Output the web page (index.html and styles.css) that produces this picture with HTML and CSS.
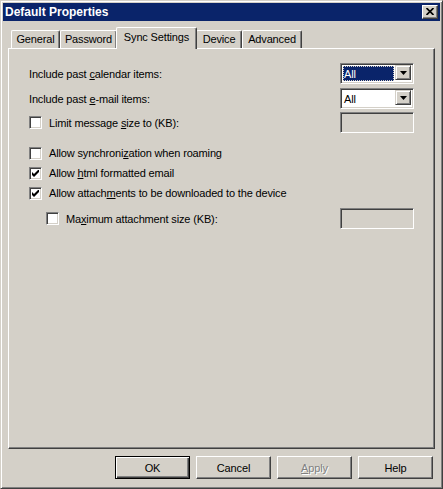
FILE: index.html
```html
<!DOCTYPE html>
<html>
<head>
<meta charset="utf-8">
<title>Default Properties</title>
<link rel="stylesheet" href="styles.css">
</head>
<body>
<div class="window">
  <div class="titlebar">
    <span class="title">Default Properties</span>
    <span class="close-btn">
      <svg width="8" height="7" viewBox="0 0 8 7"><path d="M0.5 0 L7.5 7 M7.5 0 L0.5 7" stroke="#000" stroke-width="1.7" fill="none"/></svg>
    </span>
  </div>
  <div class="client">
    <div class="tabs">
      <div class="tab tab-general">General</div>
      <div class="tab tab-password">Password</div>
      <div class="tab tab-sync active">Sync Settings</div>
      <div class="tab tab-device">Device</div>
      <div class="tab tab-advanced">Advanced</div>
    </div>
    <div class="panel">
      <div class="row row-first">
        <span class="label">Include past <u>c</u>alendar items:</span>
        <div class="combo">
          <div class="combo-value focused"><span class="sel">All</span></div>
          <div class="combo-arrow"><svg width="7" height="4" viewBox="0 0 7 4"><path d="M0 0 H7 L3.5 4 Z" fill="#000"/></svg></div>
        </div>
      </div>
      <div class="row row-second">
        <span class="label">Include past <u>e</u>-mail items:</span>
        <div class="combo">
          <div class="combo-value"><span>All</span></div>
          <div class="combo-arrow"><svg width="7" height="4" viewBox="0 0 7 4"><path d="M0 0 H7 L3.5 4 Z" fill="#000"/></svg></div>
        </div>
      </div>
      <div class="row row-third">
        <span class="check-item"><span class="check"></span><span>Limit message <u>s</u>ize to (KB):</span></span>
        <div class="textbox"></div>
      </div>
      <div class="row row-group">
        <span class="check-item"><span class="check"></span><span>Allow synchroni<u>z</u>ation when roaming</span></span>
      </div>
      <div class="row row-check">
        <span class="check-item"><span class="check checked"><svg width="7" height="7" viewBox="0 0 7 7"><path d="M0 2 L2 4 L7 -1 L7 2 L2 7 L0 5 Z" fill="#000"/></svg></span><span>Allow <u>h</u>tml formatted email</span></span>
      </div>
      <div class="row row-check">
        <span class="check-item"><span class="check checked"><svg width="7" height="7" viewBox="0 0 7 7"><path d="M0 2 L2 4 L7 -1 L7 2 L2 7 L0 5 Z" fill="#000"/></svg></span><span>Allow attach<u>m</u>ents to be downloaded to the device</span></span>
      </div>
      <div class="row row-nested">
        <span class="check-item indent"><span class="check"></span><span>Ma<u>x</u>imum attachment size (KB):</span></span>
        <div class="textbox"></div>
      </div>
    </div>
    <div class="buttons">
      <div class="btn default">OK</div>
      <div class="btn">Cancel</div>
      <div class="btn disabled"><u>A</u>pply</div>
      <div class="btn">Help</div>
    </div>
  </div>
</div>
</body>
</html>
```

FILE: styles.css
```css
* { box-sizing: border-box; }
html, body { margin: 0; padding: 0; }
body {
  background: #d4d0c8;
  font-family: "Liberation Sans", Arial, sans-serif;
  font-size: 11px;
  letter-spacing: -0.15px;
  color: #000;
}
u { text-decoration: underline; text-underline-offset: 1px; }

.window {
  width: 443px;
  height: 489px;
  border: 1px solid;
  border-color: #d4d0c8 #404040 #404040 #d4d0c8;
  box-shadow: inset 1px 1px #fff, inset -1px -1px #808080;
  padding: 2px;
  display: flex;
  flex-direction: column;
}

.titlebar {
  height: 18px;
  background: #0a246a;
  display: flex;
  align-items: center;
  justify-content: space-between;
  padding: 0 2px 0 2px;
}
.title {
  color: #fff;
  font-weight: bold;
  font-size: 12px;
  letter-spacing: 0;
}
.close-btn {
  width: 16px;
  height: 14px;
  background: #d4d0c8;
  border: 1px solid;
  border-color: #fff #404040 #404040 #fff;
  box-shadow: inset -1px -1px #808080;
  display: flex;
  align-items: center;
  justify-content: center;
  padding: 0 1px 1px 0;
}
.close-btn svg { display: block; }

.client {
  padding: 6px 5px 0 5px;
  flex: 1;
  display: flex;
  flex-direction: column;
}

.tabs {
  display: flex;
  align-items: flex-end;
  height: 21px;
  padding-left: 3px;
  position: relative;
  z-index: 1;
}
.tab {
  height: 18px;
  border-top: 1px solid #fff;
  border-left: 1px solid #fff;
  border-right: 1px solid #404040;
  box-shadow: inset -1px 0 #808080;
  border-radius: 2px 2px 0 0;
  display: flex;
  align-items: center;
  justify-content: center;
  padding-bottom: 1px;
  background: #d4d0c8;
}
.tab-general { width: 49px; }
.tab-password { width: 57px; }
.tab-sync { width: 81px; }
.tab-device { width: 46px; }
.tab-advanced { width: 60px; }
.tab.active {
  height: 22px;
  margin: 0 -1px -1px -1px;
  padding-bottom: 4px;
  position: relative;
  z-index: 2;
}

.panel {
  height: 401px;
  border: 1px solid;
  border-color: #fff #404040 #404040 #fff;
  box-shadow: inset -1px -1px #808080;
  padding: 14px 20px 0 20px;
}

.row {
  display: flex;
  align-items: center;
  justify-content: space-between;
  height: 20px;
}
.row-first { height: 21px; }
.row-second { height: 21px; margin-top: 4px; }
.row-third { height: 21px; margin-top: 3px; }
.row-group { margin-top: 10px; }
.row-nested { height: 21px; margin-top: 5px; }

.check-item {
  display: flex;
  align-items: center;
}
.check-item.indent { padding-left: 17px; }
.check {
  width: 13px;
  height: 13px;
  background: #fff;
  border: 1px solid;
  border-color: #808080 #fff #fff #808080;
  box-shadow: inset 1px 1px #404040, inset -1px -1px #d4d0c8;
  margin-right: 7px;
  display: flex;
  align-items: center;
  justify-content: center;
}
.check svg { display: block; }

.combo {
  width: 74px;
  height: 21px;
  background: #fff;
  border: 1px solid;
  border-color: #808080 #fff #fff #808080;
  box-shadow: inset 1px 1px #404040, inset -1px -1px #d4d0c8;
  padding: 2px;
  display: flex;
}
.combo-value {
  flex: 1;
  display: flex;
  align-items: stretch;
  padding: 0 1px 0 0;
}
.combo-value span {
  flex: 1;
  display: flex;
  align-items: center;
  padding-left: 1px;
}
.combo-value.focused .sel {
  background: #0a246a;
  color: #fff;
  outline: 1px dotted #d4d0c8;
  outline-offset: -1px;
}
.combo-arrow {
  width: 16px;
  height: 15px;
  margin-top: -1px;
  background: #d4d0c8;
  border: 1px solid;
  border-color: #d4d0c8 #404040 #404040 #d4d0c8;
  box-shadow: inset 1px 1px #fff, inset -1px -1px #808080;
  display: flex;
  align-items: center;
  justify-content: center;
}
.combo-arrow svg { display: block; }

.textbox {
  width: 74px;
  height: 21px;
  background: #d4d0c8;
  border: 1px solid;
  border-color: #808080 #fff #fff #808080;
  box-shadow: inset 1px 1px #404040, inset -1px -1px #d4d0c8;
}

.buttons {
  display: flex;
  justify-content: flex-end;
  gap: 6px;
  margin-top: 7px;
  padding-right: 2px;
}
.btn {
  width: 75px;
  height: 23px;
  border: 1px solid;
  border-color: #fff #404040 #404040 #fff;
  box-shadow: inset -1px -1px #808080;
  display: flex;
  align-items: center;
  justify-content: center;
}
.btn.default {
  border-color: #000;
  box-shadow: inset 1px 1px #fff, inset -1px -1px #404040, inset -2px -2px #808080;
}
.btn.disabled {
  color: #808080;
  text-shadow: 1px 1px #fff;
}
```
